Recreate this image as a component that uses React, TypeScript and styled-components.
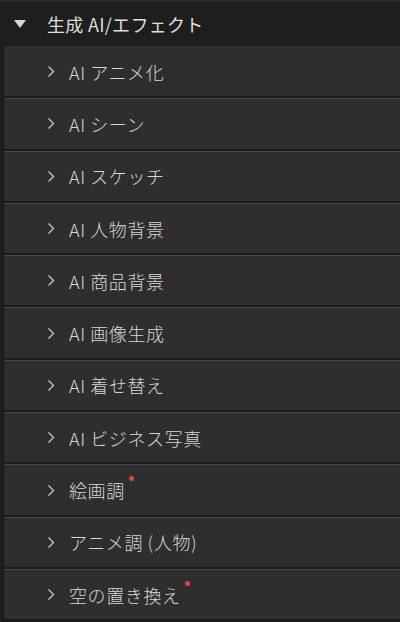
import React from "react";
import styled, { createGlobalStyle } from "styled-components";

const GlobalStyle = createGlobalStyle`
  html, body {
    margin: 0;
    padding: 0;
    background: #1e1e1e;
  }
  body {
    font-family: "Noto Sans CJK JP", "Noto Sans", sans-serif;
  }
`;

const Panel = styled.div({
  width: 400,
  height: 622,
  overflow: "hidden",
  display: "flex",
  flexDirection: "column",
  backgroundColor: "#1e1e1e",
  borderTop: "2px solid #2b2b2b",
  boxSizing: "border-box",
});

const Header = styled.div({
  height: 44,
  display: "flex",
  alignItems: "center",
  paddingLeft: 14,
  gap: 21,
  color: "#dedede",
  fontSize: 18,
  letterSpacing: 0.3,
  flexShrink: 0,
});

const List = styled.div({
  display: "flex",
  flexDirection: "column",
  marginLeft: 3,
  borderLeft: "1px solid #161616",
});

const Row = styled.div<{ $first?: boolean }>(({ $first }) => ({
  height: 49.3,
  display: "flex",
  alignItems: "center",
  paddingLeft: 43,
  gap: 14,
  backgroundColor: "#2e2e2e",
  borderTop: $first ? "1px solid #2e2e2e" : "1px solid #474747",
  borderBottom: "2px solid #1b1b1b",
  color: "#d6d6d6",
  fontSize: 18,
  fontWeight: 300,
  letterSpacing: 0.6,
  flexShrink: 0,
}));

const Label = styled.span({
  position: "relative",
  whiteSpace: "nowrap",
  lineHeight: 1,
});

const Dot = styled.span({
  position: "absolute",
  top: -5,
  right: -9,
  width: 5,
  height: 5,
  borderRadius: "50%",
  backgroundColor: "#e2434f",
});

const Chevron = () => (
  <svg width="8" height="13" viewBox="0 0 8 13">
    <path d="M1.5 1.5 L6.5 6.5 L1.5 11.5" fill="none" stroke="#cfcfcf" strokeWidth="1.2" />
  </svg>
);

const Triangle = () => (
  <svg width="12" height="9" viewBox="0 0 12 9">
    <path d="M0 0 H12 L6 8 Z" fill="#d6d6d6" />
  </svg>
);

const items: { label: string; dot?: boolean }[] = [
  { label: "AI アニメ化" },
  { label: "AI シーン" },
  { label: "AI スケッチ" },
  { label: "AI 人物背景" },
  { label: "AI 商品背景" },
  { label: "AI 画像生成" },
  { label: "AI 着せ替え" },
  { label: "AI ビジネス写真" },
  { label: "絵画調", dot: true },
  { label: "アニメ調 (人物)" },
  { label: "空の置き換え", dot: true },
];

const App = () => (
  <>
    <GlobalStyle />
    <Panel>
      <Header>
        <Triangle />
        <Label>生成 AI/エフェクト</Label>
      </Header>
      <List>
        {items.map((item, i) => (
          <Row key={item.label} $first={i === 0}>
            <Chevron />
            <Label>
              {item.label}
              {item.dot && <Dot />}
            </Label>
          </Row>
        ))}
      </List>
    </Panel>
  </>
);

export default App;
